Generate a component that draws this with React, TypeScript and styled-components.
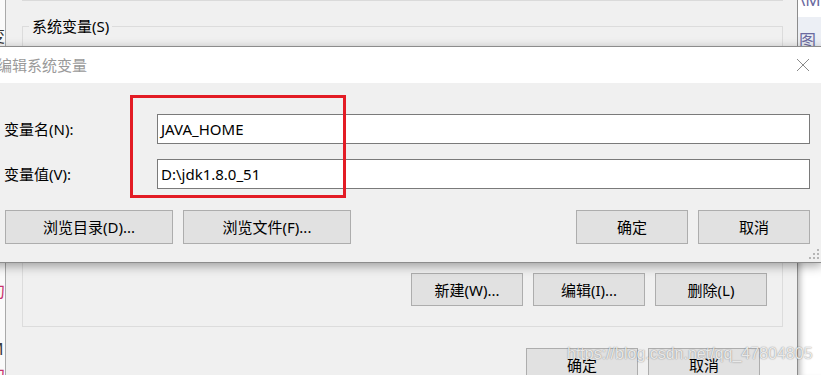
import styled, { createGlobalStyle } from 'styled-components';

const GlobalStyle = createGlobalStyle`
  body {
    margin: 0;
    font-family: "Noto Sans", "Noto Sans CJK SC", sans-serif;
    background: #ffffff;
  }
`;

const Page = styled.div`
  position: relative;
  width: 821px;
  height: 375px;
  overflow: hidden;
  display: flex;
  background: #ffffff;
`;

// 左侧露出的页面
const LeftStrip = styled.div`
  width: 5px;
  flex: none;
  background: #fafafa;
  overflow: hidden;
  display: flex;
  flex-direction: column;
`;

const StripGlyph = styled.span<{ $top: number; $color: string }>`
  display: block;
  margin-top: ${(p) => p.$top}px;
  margin-left: -11px;
  font-size: 16px;
  line-height: 18px;
  color: ${(p) => p.$color};
  white-space: nowrap;
`;

// 后面的“环境变量”窗口
const BackWindow = styled.div`
  width: 793px;
  flex: none;
  box-sizing: border-box;
  background: #f0f0f0;
  border-left: 1px solid #a9a9a9;
  border-right: 1px solid #8c8c8c;
  display: flex;
  flex-direction: column;
`;

const TopFragment = styled.div`
  height: 3px;
  margin: 0 14px 0 16px;
  border: 1px solid #dadada;
  border-top: none;
`;

const GroupBox = styled.fieldset`
  margin: 15px 14px 0 16px;
  padding: 0 15px 20px 0;
  border: 1px solid #dcdcdc;
  min-width: 0;
`;

const Legend = styled.legend`
  margin-left: 6px;
  padding: 0 3px;
  font-size: 15px;
  line-height: 20px;
  color: #000;
`;

const ButtonRow = styled.div<{ $top: number; $right?: number }>`
  display: flex;
  justify-content: flex-end;
  gap: 10px;
  margin-top: ${(p) => p.$top}px;
  padding-right: ${(p) => p.$right ?? 0}px;
`;

const WinButton = styled.button<{ $w?: number; $h?: number }>`
  width: ${(p) => p.$w ?? 112}px;
  height: ${(p) => p.$h ?? 33}px;
  flex: none;
  box-sizing: border-box;
  padding: 0;
  background: #e1e1e1;
  border: 1px solid #adadad;
  border-radius: 0;
  font-family: "Noto Sans", "Noto Sans CJK SC", sans-serif;
  font-size: 15px;
  line-height: 20px;
  color: #000;
`;

// 右侧露出的页面
const RightStrip = styled.div`
  flex: 1;
  background: #ffffff;
  box-shadow: inset 7px 0 6px -5px rgba(0, 0, 0, 0.3);
  display: flex;
  flex-direction: column;
  overflow: hidden;
`;

const RightTop = styled.div`
  height: 46px;
  background: linear-gradient(#ffffff 0, #ffffff 17px, #eceff5 17px);
  overflow: hidden;
  display: flex;
  flex-direction: column;
  padding-left: 1px;
`;

const RightText = styled.span<{ $top: number }>`
  display: block;
  margin-top: ${(p) => p.$top}px;
  font-size: 17px;
  line-height: 18px;
  color: #6b6aa0;
  white-space: nowrap;
`;

// 编辑系统变量 对话框
const Dialog = styled.div`
  position: absolute;
  top: 46px;
  left: -11px;
  width: 833px;
  box-sizing: border-box;
  background: #f0f0f0;
  border: 1px solid #8c8c8c;
  box-shadow: 0 3px 10px rgba(0, 0, 0, 0.35);
`;

const TitleBar = styled.div`
  height: 36px;
  background: #ffffff;
  display: flex;
  align-items: center;
  justify-content: space-between;
  padding: 0 11px 0 7px;
`;

const Title = styled.span`
  font-size: 15px;
  line-height: 20px;
  color: #9a9a9a;
`;

const CloseIcon = styled.svg`
  width: 14px;
  height: 14px;
  display: block;
`;

const DialogBody = styled.div`
  padding: 31px 11px 18px 15px;
`;

const FieldGrid = styled.div`
  display: grid;
  grid-template-columns: 152px 1fr;
  row-gap: 15px;
  align-items: center;
`;

const Label = styled.label`
  font-size: 15px;
  line-height: 20px;
  color: #000;
  margin-left: -1px;
`;

const TextBox = styled.div`
  height: 30px;
  box-sizing: border-box;
  background: #ffffff;
  border: 1px solid #7a7a7a;
  padding: 0 3px;
  display: flex;
  align-items: center;
  font-size: 15px;
  color: #000;
`;

const DialogButtons = styled.div`
  display: flex;
  justify-content: space-between;
  margin-top: 21px;
`;

const ButtonGroup = styled.div`
  display: flex;
  gap: 10px;
`;

const Highlight = styled.div`
  position: absolute;
  left: 140px;
  top: 48px;
  width: 216px;
  height: 103px;
  box-sizing: border-box;
  border: 3px solid #e31c25;
  pointer-events: none;
`;

const Grip = styled.svg`
  position: absolute;
  right: 1px;
  bottom: 2px;
  width: 11px;
  height: 11px;
`;

const Watermark = styled.div`
  position: absolute;
  left: 567px;
  top: 344px;
  font-family: "Liberation Sans", Arial, sans-serif;
  font-size: 16px;
  line-height: 20px;
  color: rgba(250, 250, 250, 0.85);
  text-shadow: 0 0 1px rgba(0, 0, 0, 0.35), 0 0 2px rgba(0, 0, 0, 0.2);
  white-space: nowrap;
  pointer-events: none;
`;

const App = () => {
  return (
    <>
      <GlobalStyle />
      <Page>
        <LeftStrip>
          <StripGlyph $top={27} $color="#333">变</StripGlyph>
          <StripGlyph $top={237} $color="#c8326e">句</StripGlyph>
          <StripGlyph $top={40} $color="#3a3a3a">M</StripGlyph>
          <StripGlyph $top={8} $color="#c8326e">句</StripGlyph>
        </LeftStrip>

        <BackWindow>
          <TopFragment />
          <GroupBox>
            <Legend>系统变量(S)</Legend>
            <ButtonRow $top={237}>
              <WinButton>新建(W)...</WinButton>
              <WinButton>编辑(I)...</WinButton>
              <WinButton>删除(L)</WinButton>
            </ButtonRow>
          </GroupBox>
          <ButtonRow $top={21} $right={37}>
            <WinButton>确定</WinButton>
            <WinButton>取消</WinButton>
          </ButtonRow>
        </BackWindow>

        <RightStrip>
          <RightTop>
            <RightText $top={-9}>\M</RightText>
            <RightText $top={23}>图</RightText>
          </RightTop>
        </RightStrip>

        <Dialog>
          <TitleBar>
            <Title>编辑系统变量</Title>
            <CloseIcon viewBox="0 0 14 14">
              <path d="M1 1 L13 13 M13 1 L1 13" stroke="#8a8a8a" strokeWidth="1" fill="none" />
            </CloseIcon>
          </TitleBar>
          <DialogBody>
            <FieldGrid>
              <Label>变量名(N):</Label>
              <TextBox>JAVA_HOME</TextBox>
              <Label>变量值(V):</Label>
              <TextBox>D:\jdk1.8.0_51</TextBox>
            </FieldGrid>
            <DialogButtons>
              <ButtonGroup>
                <WinButton $w={168} $h={34}>浏览目录(D)...</WinButton>
                <WinButton $w={168} $h={34}>浏览文件(F)...</WinButton>
              </ButtonGroup>
              <ButtonGroup>
                <WinButton $h={34}>确定</WinButton>
                <WinButton $h={34}>取消</WinButton>
              </ButtonGroup>
            </DialogButtons>
          </DialogBody>
          <Highlight />
          <Grip viewBox="0 0 11 11">
            <g fill="#b5b5b5">
              <rect x="8" y="0" width="2" height="2" />
              <rect x="4" y="4" width="2" height="2" />
              <rect x="8" y="4" width="2" height="2" />
              <rect x="0" y="8" width="2" height="2" />
              <rect x="4" y="8" width="2" height="2" />
              <rect x="8" y="8" width="2" height="2" />
            </g>
          </Grip>
        </Dialog>

        <Watermark>https://blog.csdn.net/qq_47804805</Watermark>
      </Page>
    </>
  );
};

export default App;
